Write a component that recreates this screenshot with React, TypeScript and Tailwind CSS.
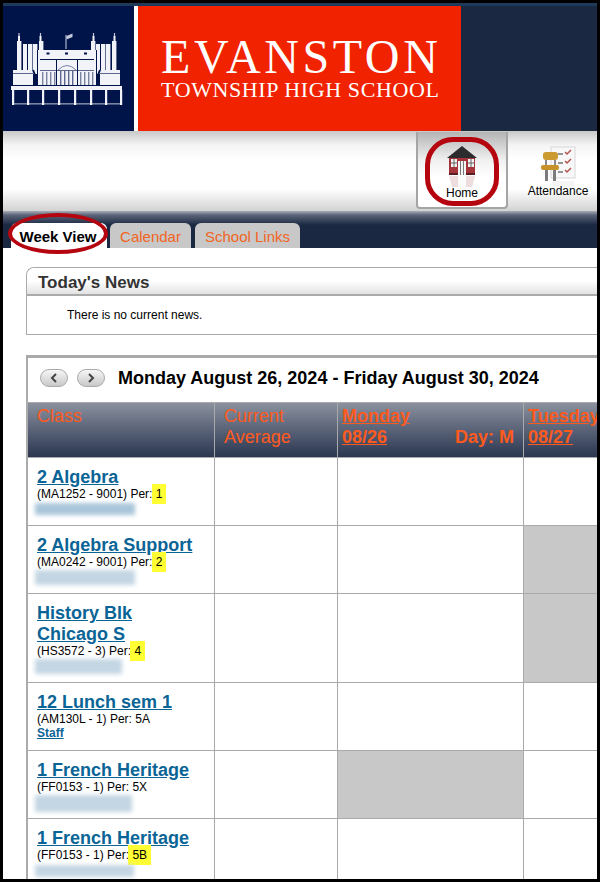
import * as React from "react";

const arial = { fontFamily: '"Liberation Sans", Arial, sans-serif' };
const white = "#f2f3f9";
const navy = "#00144a";

const BuildingLogo = () => {
  const towerCols = [17, 23, 28, 33, 39, 91, 96, 101, 106, 112];
  const finials = [18, 39.5, 92.5, 113.5];
  const pillars = [12, 27, 42, 58, 74, 90, 105, 120];
  const panels = [42, 46, 50, 54, 80, 84, 88, 92];
  const door = [60, 64, 68, 72];
  return (
    <svg width="131" height="125" viewBox="0 0 131 125" className="block">
      <g transform="translate(-3 -6)">
        {/* towers */}
        {towerCols.map((x, i) => (
          <rect
            key={x}
            x={x}
            y={i === 0 || i === 4 || i === 5 || i === 9 ? 41 : 44}
            width={i === 1 || i === 6 ? 4 : 4.4}
            height="30"
            fill={white}
          />
        ))}
        {finials.map((x) => (
          <g key={x}>
            <rect x={x} y="36" width="2" height="6" fill={white} />
            <rect x={x + 0.4} y="33" width="1.2" height="3" fill="#c5c9dc" />
          </g>
        ))}
        {/* flag */}
        <rect x="65.5" y="35" width="1" height="14" fill="#cfd3e4" />
        <path d="M66.5 36l6-2.500v3.500l-6 2.500z" fill="#c5c9dc" />
        {/* wings */}
        <rect x="13" y="70" width="20" height="15" fill={white} />
        <rect x="13" y="73" width="20" height="1" fill="#5b678f" />
        <rect x="100" y="70" width="20" height="15" fill={white} />
        <rect x="100" y="73" width="20" height="1" fill="#5b678f" />
        <path d="M33 70l6 15M100 70l-6 15" stroke={navy} strokeWidth="2" />
        {/* middle block */}
        <rect x="38" y="50" width="58" height="35" fill={white} />
        <rect x="46.500" y="52.500" width="3" height="2" fill={navy} />
        <rect x="65" y="52.500" width="3" height="2" fill={navy} />
        <rect x="84" y="52.500" width="3" height="2" fill={navy} />
        <rect x="40" y="59" width="54" height="1" fill={navy} />
        <rect x="40" y="70" width="54" height="1" fill="#5b678f" />
        {panels.map((x) => (
          <rect key={x} x={x} y="72" width="1.400" height="13" fill="#79829f" />
        ))}
        {door.map((x) => (
          <rect key={x} x={x} y="70" width="1.400" height="15" fill="#5b678f" />
        ))}
        <path d="M58 70q9-9 18 0" stroke="#79829f" strokeWidth="1" fill="none" />
        <rect x="56" y="59" width="1" height="26" fill={navy} />
        <rect x="77" y="59" width="1" height="26" fill={navy} />
        <rect x="37" y="50" width="1" height="35" fill={navy} />
        <rect x="96" y="50" width="1" height="35" fill={navy} />
        {/* arcade */}
        <rect x="11" y="86" width="111" height="4" fill={white} />
        {pillars.map((x) => (
          <rect key={x} x={x} y="90" width="2.200" height="15" fill={white} />
        ))}
        <rect x="12" y="103.500" width="110" height="0.800" fill={white} />
      </g>
    </svg>
  );
};

const HouseIcon = () => (
  <svg width="36" height="50" viewBox="0 0 36 50" className="block">
    <path d="M18 1L3 13h30z" fill="#2c2c2e" />
    <rect x="5" y="13" width="26" height="17" fill="#a5343a" />
    <rect x="5" y="28" width="26" height="2" fill="#5d1d20" />
    <rect x="7" y="14" width="6" height="8" fill="#f2f2f2" />
    <rect x="24" y="14" width="6" height="8" fill="#f2f2f2" />
    <path d="M10 14v8M7 18h6M27 14v8M24 18h6" stroke="#444" strokeWidth="0.8" />
    <rect x="14" y="16" width="8" height="14" fill="#f4f4f4" />
    <path d="M16.500 16v14M19.500 16v14" stroke="#777" strokeWidth="1" />
    <g opacity="0.22">
      <path d="M5 31h26l-3 11H8z" fill="#b76a6e" />
      <rect x="14" y="31" width="8" height="13" fill="#eee" />
    </g>
  </svg>
);

const AttendanceIcon = () => (
  <svg width="36" height="46" viewBox="0 0 36 46" className="block">
    <rect x="11" y="1" width="24" height="31" fill="#f8f8f8" stroke="#d8d8d8" />
    <path d="M25 6l2 2 4-4M25 15l2 2 4-4M25 24l2 2 4-4" stroke="#b5534f" strokeWidth="1.500" fill="none" />
    <path d="M18 8h5M18 17h5M18 26h5" stroke="#333" strokeWidth="1" />
    <rect x="5" y="14" width="2" height="6" fill="#8a8a8a" />
    <rect x="14" y="14" width="2" height="6" fill="#8a8a8a" />
    <rect x="5" y="24" width="3" height="11" fill="#7c7c7c" />
    <rect x="13" y="24" width="3" height="11" fill="#7c7c7c" />
    <rect x="3" y="6" width="15" height="8" rx="3" fill="#cb9a30" />
    <rect x="1" y="19" width="18" height="5" rx="2" fill="#c8922a" />
    <path d="M12 35h22v6H12z" fill="#e6e6e6" opacity="0.4" />
  </svg>
);

const Arrow = ({ dir }: { dir: "left" | "right" }) => (
  <button className="flex h-[18px] w-[28px] items-center justify-center rounded-[9px] border border-[#aaa] bg-gradient-to-b from-[#f6f6f6] to-[#c9c9c9]">
    <svg width="8" height="10" viewBox="0 0 8 10">
      <path
        d={dir === "left" ? "M6 1L2 5l4 4" : "M2 1l4 4-4 4"}
        stroke="#444"
        strokeWidth="2"
        fill="none"
      />
    </svg>
  </button>
);

type Row = {
  title: string[];
  code: string;
  per: string;
  hi?: boolean;
  // size of the blurred teacher name
  blur?: { w: number; h: number; top: number; color: string };
  staff?: boolean;
  h: string;
  mon?: boolean;
  tue?: boolean;
};

const rows: Row[] = [
  { title: ["2 Algebra"], code: "(MA1252 - 9001) Per: ", per: "1", hi: true, blur: { w: 100, h: 12, top: 2, color: "#a9c6da" }, h: "h-[68px]" },
  { title: ["2 Algebra Support"], code: "(MA0242 - 9001) Per: ", per: "2", hi: true, blur: { w: 100, h: 15, top: 1, color: "#c4d6e3" }, h: "h-[68px]", tue: true },
  { title: ["History Blk", "Chicago S"], code: "(HS3572 - 3) Per: ", per: "4", hi: true, blur: { w: 87, h: 15, top: 1, color: "#c4d6e3" }, h: "h-[89px]", tue: true },
  { title: ["12 Lunch sem 1"], code: "(AM130L - 1) Per: ", per: "5A", staff: true, h: "h-[68px]" },
  { title: ["1 French Heritage"], code: "(FF0153 - 1) Per: ", per: "5X", blur: { w: 97, h: 17, top: 1, color: "#c4d6e3" }, h: "h-[68px]", mon: true },
  { title: ["1 French Heritage"], code: "(FF0153 - 1) Per: ", per: "5B", hi: true, blur: { w: 99, h: 12, top: 3, color: "#c4d6e3" }, h: "h-[68px]" },
];

const columns = "grid grid-cols-[186px_123px_186px_186px]";

export default function App() {
  return (
    <div
      className="h-[882px] w-[600px] overflow-hidden border-[3px] border-black bg-white"
      style={arial}
    >
      <div className="relative h-[876px] w-[594px] overflow-hidden">
        <div className="h-[3px] bg-[#1d3a5a]" />
        <div className="flex h-[125px]">
          <div className="w-[131px] bg-[#00144a]">
            <BuildingLogo />
          </div>
          <div className="w-[4px] bg-white" />
          <div
            className="w-[323px] bg-[#f02200] pl-[23px] pt-[31px] text-white"
            style={{ fontFamily: '"Liberation Serif", "Times New Roman", serif' }}
          >
            <div className="text-[48px] leading-[40px] tracking-[3.6px]">EVANSTON</div>
            <div className="mt-[2px] whitespace-nowrap text-[22px] leading-[22px] tracking-[0.6px]">
              TOWNSHIP HIGH SCHOOL
            </div>
          </div>
          <div className="flex-1 bg-[#1a2842]" />
        </div>

        <div className="flex h-[80px] bg-[linear-gradient(#c8c8c8_0,#f4f4f4_14px,#ffffff_28px,#ffffff_58px,#d2d2d2_80px)] pl-[413px] pt-[1px]">
          <div className="flex h-[77px] w-[92px] flex-col items-center rounded-b-[4px] border-x-2 border-b-2 border-[#a5a5a5] bg-[linear-gradient(#b4b4b4_0,#f0f0f0_28px,#ffffff_45px)] pt-[13px]">
            <HouseIcon />
            <span className="mt-[-9px] text-[12px] leading-[14px] text-black">Home</span>
          </div>
          <div className="ml-[19px] flex w-[62px] flex-col items-center pt-[14px]">
            <AttendanceIcon />
            <span className="mt-[-8px] text-[12px] leading-[14px] text-black">Attendance</span>
          </div>
        </div>

        <div className="flex h-[37px] items-end bg-[linear-gradient(#a9aeb6_0,#5c6579_4px,#1a2842_14px)] pl-[8px]">
          <div className="flex h-[25px] w-[96px] items-center justify-center rounded-t-[6px] bg-white pr-[2px] pt-[3px] text-[15px] font-bold text-black">
            Week View
          </div>
          <div className="ml-[3px] flex h-[25px] w-[81px] items-center justify-center rounded-t-[6px] bg-[#c8c8c8] pt-[3px] text-[15px] text-[#f26522]">
            Calendar
          </div>
          <div className="ml-[4px] flex h-[25px] w-[105px] items-center justify-center rounded-t-[6px] bg-[#c8c8c8] pt-[3px] text-[15px] text-[#f26522]">
            School Links
          </div>
        </div>

        <div className="pl-[23px] pt-[19px]">
          <div className="h-[68px] rounded-tl-[8px] border-y border-l border-[#aaa]">
            <div className="flex h-[28px] items-center rounded-tl-[8px] border-b-2 border-[#aaa] bg-gradient-to-b from-white via-white to-[#e2e2e2] pl-[11px] pt-[4px] text-[17px] font-bold text-[#333]">
              Today's News
            </div>
            <div className="pl-[40px] pt-[12px] text-[12px] leading-[14px] text-black">
              There is no current news.
            </div>
          </div>

          <div className="mt-[20px] border-l-2 border-t-[3px] border-[#aaa]">
            <div className="flex h-[44px] items-center pb-[4px] pl-[12px]">
              <Arrow dir="left" />
              <div className="ml-[9px]">
                <Arrow dir="right" />
              </div>
              <div className="ml-[13px] whitespace-nowrap text-[18px] font-bold text-black">
                Monday August 26, 2024 - Friday August 30, 2024
              </div>
            </div>

            <div className={`${columns} h-[56px] border-y border-[#aaa] bg-gradient-to-b from-[#8b919e] to-[#2c3751] text-[18px] leading-[21px] text-[#ff5a1e]`}>
              <div className="pl-[9px] pt-[3px]">Class</div>
              <div className="border-l border-[#aaa] pl-[9px] pt-[3px]">
                Current
                <br />
                Average
              </div>
              <div className="border-l border-[#aaa] pl-[4px] pr-[9px] pt-[3px] font-bold">
                <span className="underline">Monday</span>
                <div className="flex justify-between">
                  <span className="underline">08/26</span>
                  <span>Day: M</span>
                </div>
              </div>
              <div className="border-l border-[#aaa] pl-[4px] pt-[3px] font-bold">
                <span className="underline">Tuesday</span>
                <br />
                <span className="underline">08/27</span>
              </div>
            </div>

            {rows.map((row, i) => (
              <div key={i} className={`${columns} ${row.h} border-b border-[#aaa]`}>
                <div className="pl-[9px] pt-[9px]">
                  <div className="text-[18px] font-bold leading-[21px] text-[#0b6496]">
                    {row.title.map((t) => (
                      <div key={t}>
                        <span className="underline">{t}</span>
                      </div>
                    ))}
                  </div>
                  <div className="text-[12px] leading-[13px] text-black">
                    {row.code}
                    <span className={row.hi ? "ml-[-4px] bg-[#ffff33] px-[4px] py-[3px]" : ""}>
                      {row.per}
                    </span>
                  </div>
                  {row.staff && (
                    <div className="text-[12px] font-bold leading-[14px] text-[#0b6496] underline">Staff</div>
                  )}
                  {row.blur && (
                    <div
                      className="ml-[-2px] blur-[2px]"
                      style={{
                        width: row.blur.w,
                        height: row.blur.h,
                        marginTop: row.blur.top,
                        backgroundColor: row.blur.color,
                      }}
                    />
                  )}
                </div>
                <div className="border-l border-[#aaa]" />
                <div className={`border-l border-[#aaa] ${row.mon ? "bg-[#c8c8c8]" : ""}`} />
                <div className={`border-l border-[#aaa] ${row.tue ? "bg-[#c8c8c8]" : ""}`} />
              </div>
            ))}
          </div>
        </div>

        {/* red hand-drawn highlights */}
        <div className="absolute left-[422px] top-[134px] h-[69px] w-[74px] rounded-[28px] border-[5px] border-[#b5050f]" />
        <div className="absolute left-[5px] top-[210px] h-[41px] w-[100px] rounded-[50%] border-[4px] border-[#b5050f]" />
      </div>
    </div>
  );
}
